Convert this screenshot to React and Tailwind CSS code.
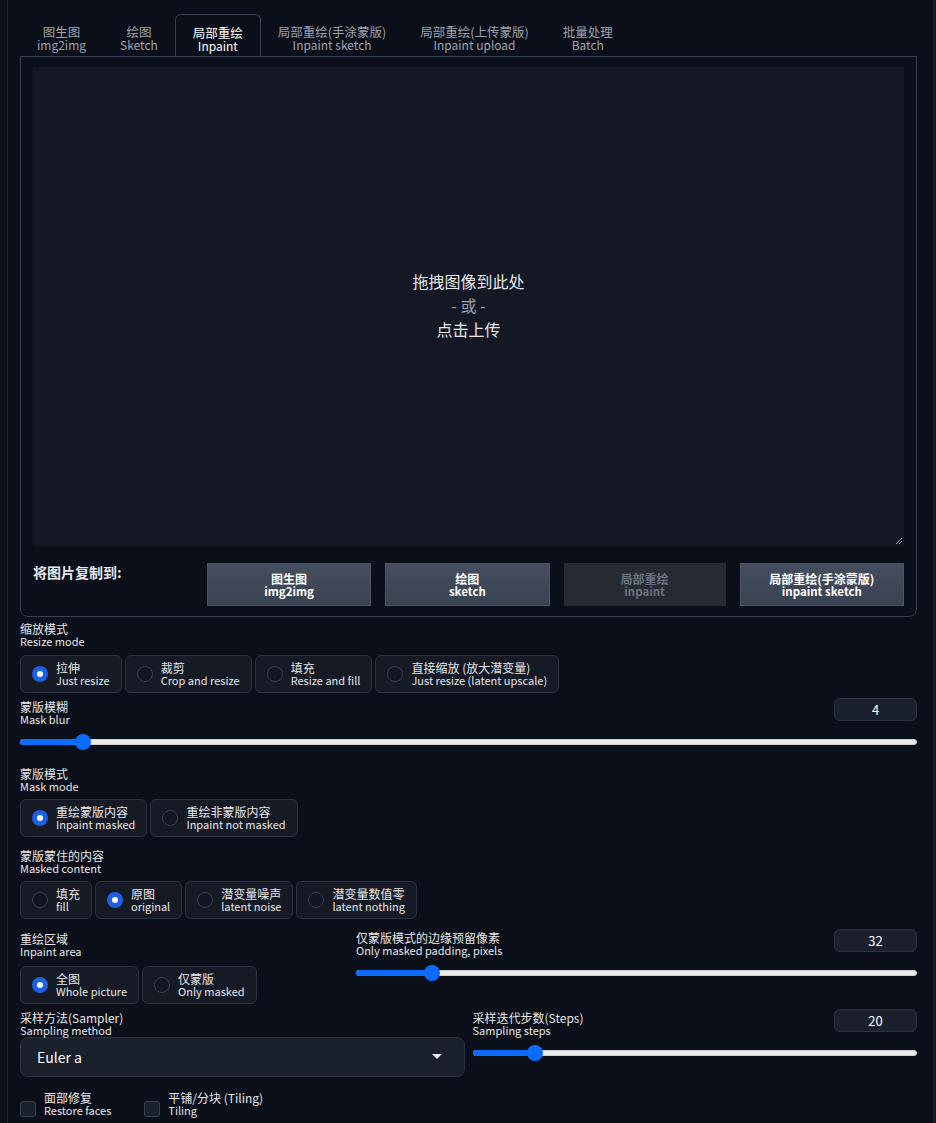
import React from "react";

const tabs = [
  ["图生图", "img2img"],
  ["绘图", "Sketch"],
  ["局部重绘", "Inpaint"],
  ["局部重绘(手涂蒙版)", "Inpaint sketch"],
  ["局部重绘(上传蒙版)", "Inpaint upload"],
  ["批量处理", "Batch"],
];

const copyTargets = [
  ["图生图", "img2img", false],
  ["绘图", "sketch", false],
  ["局部重绘", "inpaint", true],
  ["局部重绘(手涂蒙版)", "inpaint sketch", false],
];

const Label = ({ zh, en }) => (
  <div className="leading-[13px] text-[#e5e7eb]">
    <div className="text-[12px]">{zh}</div>
    <div className="text-[11px]">{en}</div>
  </div>
);

const Radio = ({ zh, en, checked }) => (
  <div className="flex items-center gap-2 rounded-md border border-[#2b3241] bg-[#151a25] pl-[11px] pr-[11px] h-[38px]">
    {checked ? (
      <span className="w-4 h-4 rounded-full bg-[#1d5fe6] flex items-center justify-center">
        <span className="w-[6px] h-[6px] rounded-full bg-white" />
      </span>
    ) : (
      <span className="w-4 h-4 rounded-full border border-[#374151] bg-[#111622]" />
    )}
    <div className="leading-[13px] text-[#e5e7eb]">
      <div className="text-[12px]">{zh}</div>
      <div className="text-[11px]">{en}</div>
    </div>
  </div>
);

const RadioGroup = ({ items, value }) => (
  <div className="flex gap-[3px]">
    {items.map(([zh, en]) => (
      <Radio key={en} zh={zh} en={en} checked={en === value} />
    ))}
  </div>
);

const NumberBox = ({ value }) => (
  <div className="w-[83px] h-[23px] rounded-md border border-[#2b3241] bg-[#1a202c] text-[13px] text-white flex items-center justify-center">
    {value}
  </div>
);

const Slider = ({ pct }) => (
  <div className="relative h-4 flex items-center">
    <div className="w-full h-[6px] rounded-full bg-[#ebebeb] border border-[#cfcfcf]" />
    <div
      className="absolute left-0 h-[6px] rounded-full bg-[#0b6cff]"
      style={{ width: `calc(8px + (100% - 16px) * ${pct})` }}
    />
    <div
      className="absolute w-4 h-4 rounded-full bg-[#0b6cff]"
      style={{ left: `calc((100% - 16px) * ${pct})` }}
    />
  </div>
);

const SliderBlock = ({ zh, en, value, pct }) => (
  <div>
    <div className="flex items-start justify-between h-[28px]">
      <div className="pt-[2px]">
        <Label zh={zh} en={en} />
      </div>
      <NumberBox value={value} />
    </div>
    <div className="mt-[8px]">
      <Slider pct={pct} />
    </div>
  </div>
);

const Checkbox = ({ zh, en }) => (
  <div className="flex items-center gap-2">
    <span className="w-4 h-4 rounded-[3px] border border-[#374151] bg-[#1a202c] mt-[10px]" />
    <div className="leading-[12px] text-[#e5e7eb]">
      <div className="text-[12px]">{zh}</div>
      <div className="text-[11px]">{en}</div>
    </div>
  </div>
);

export default function App() {
  return (
    <div
      className="min-h-screen bg-[#0b0f19] flex"
      style={{ fontFamily: '"Noto Sans CJK SC", "Noto Sans", sans-serif' }}
    >
      <div className="w-[7px]" />
      <div className="w-px bg-[#1f2533]" />
      <div className="flex-1 pl-[12px] pr-[16px]">
        {/* tabs */}
        <div className="flex pt-[14px]">
          {tabs.map(([zh, en], i) => (
            <div
              key={en}
              className={
                i === 2
                  ? "px-[17px] h-[42px] pt-[11px] flex flex-col items-center leading-[13px] text-white border border-b-0 border-[#374151] rounded-t-md bg-[#0b0f19] -mb-px relative z-10"
                  : "px-[17px] h-[42px] pt-[11px] flex flex-col items-center leading-[13px] text-[#9ca3af]"
              }
            >
              <div className="text-[12.5px]">{zh}</div>
              <div className="text-[12px]">{en}</div>
            </div>
          ))}
        </div>

        {/* panel */}
        <div className="border border-[#374151] rounded-b-lg px-[12px] pt-[10px] pb-[10px]">
          <div className="relative h-[479px] bg-[#141824] flex flex-col items-center justify-center text-center pb-[4px]">
            <div className="text-[16px] leading-[24px] text-[#e5e7eb]">拖拽图像到此处</div>
            <div className="text-[16px] leading-[24px] text-[#9ca3af]">- 或 -</div>
            <div className="text-[16px] leading-[24px] text-[#e5e7eb]">点击上传</div>
            <svg className="absolute right-[1px] bottom-[1px]" width="8" height="8" viewBox="0 0 8 8">
              <path d="M7 1 L1 7 M7 4 L4 7" stroke="#9ca3af" strokeWidth="1" />
            </svg>
          </div>
          <div className="flex mt-[17px]">
            <div className="w-[174px] text-[14px] leading-[18px] font-semibold text-[#e5e7eb]">将图片复制到:</div>
            <div className="flex-1 flex gap-[14px]">
              {copyTargets.map(([zh, en, disabled]) => (
                <div
                  key={en}
                  className={
                    disabled
                      ? "flex-1 h-[43px] bg-[#262a33] text-[#6b7280] leading-[13px] font-semibold flex flex-col items-center justify-center"
                      : "flex-1 h-[43px] bg-gradient-to-b from-[#454e5e] to-[#394251] border border-[#4b5563] text-white leading-[13px] font-semibold flex flex-col items-center justify-center"
                  }
                >
                  <div className="text-[12px]">{zh}</div>
                  <div className="text-[11.5px]">{en}</div>
                </div>
              ))}
            </div>
          </div>
        </div>

        {/* resize mode */}
        <div className="mt-[5px]">
          <Label zh="缩放模式" en="Resize mode" />
        </div>
        <div className="mt-[7px]">
          <RadioGroup
            value="Just resize"
            items={[
              ["拉伸", "Just resize"],
              ["裁剪", "Crop and resize"],
              ["填充", "Resize and fill"],
              ["直接缩放 (放大潜变量)", "Just resize (latent upscale)"],
            ]}
          />
        </div>

        {/* mask blur */}
        <div className="mt-[5px]">
          <SliderBlock zh="蒙版模糊" en="Mask blur" value="4" pct={4 / 64} />
        </div>

        {/* mask mode */}
        <div className="mt-[17px]">
          <Label zh="蒙版模式" en="Mask mode" />
        </div>
        <div className="mt-[6px]">
          <RadioGroup
            value="Inpaint masked"
            items={[
              ["重绘蒙版内容", "Inpaint masked"],
              ["重绘非蒙版内容", "Inpaint not masked"],
            ]}
          />
        </div>

        {/* masked content */}
        <div className="mt-[12px]">
          <Label zh="蒙版蒙住的内容" en="Masked content" />
        </div>
        <div className="mt-[6px]">
          <RadioGroup
            value="original"
            items={[
              ["填充", "fill"],
              ["原图", "original"],
              ["潜变量噪声", "latent noise"],
              ["潜变量数值零", "latent nothing"],
            ]}
          />
        </div>

        {/* inpaint area + padding */}
        <div className="flex gap-[8px] mt-[10px]">
          <div className="w-[328px]">
            <div className="pt-[3px]">
              <Label zh="重绘区域" en="Inpaint area" />
            </div>
            <div className="mt-[8px]">
              <RadioGroup
                value="Whole picture"
                items={[
                  ["全图", "Whole picture"],
                  ["仅蒙版", "Only masked"],
                ]}
              />
            </div>
          </div>
          <div className="flex-1">
            <SliderBlock
              zh="仅蒙版模式的边缘预留像素"
              en="Only masked padding, pixels"
              value="32"
              pct={32 / 256}
            />
          </div>
        </div>

        {/* sampler + steps */}
        <div className="flex gap-[8px] mt-[5px]">
          <div className="flex-1">
            <div className="pt-[2px]">
              <Label zh="采样方法(Sampler)" en="Sampling method" />
            </div>
            <div className="h-[40px] rounded-lg border border-[#2b3241] bg-[#1a202c] flex items-center justify-between pl-[16px] pr-[22px]">
              <span className="text-[14px] text-white">Euler a</span>
              <svg width="10" height="6" viewBox="0 0 10 6">
                <path d="M0 0 H10 L5 5 Z" fill="#e5e7eb" />
              </svg>
            </div>
          </div>
          <div className="flex-1">
            <SliderBlock zh="采样迭代步数(Steps)" en="Sampling steps" value="20" pct={19 / 149} />
          </div>
        </div>

        {/* checkboxes */}
        <div className="flex gap-[33px] mt-[14px]">
          <Checkbox zh="面部修复" en="Restore faces" />
          <Checkbox zh="平铺/分块 (Tiling)" en="Tiling" />
        </div>
      </div>
      <div className="w-[3px] bg-[#161b26]" />
    </div>
  );
}
